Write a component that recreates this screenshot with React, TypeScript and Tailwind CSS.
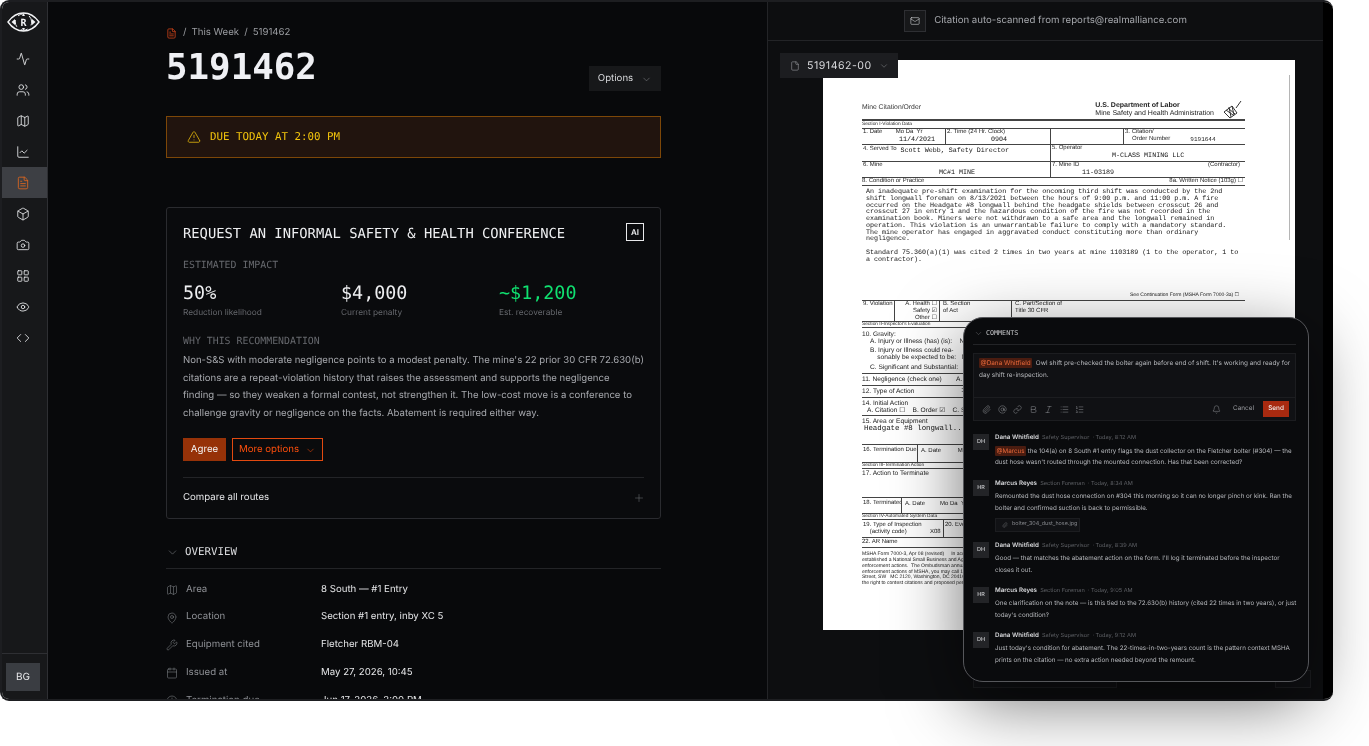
import React from "react";
import { Activity, Users, Map as MapIcon, ChartLine, FileText, Box, Camera, LayoutGrid, Eye, Code, ChevronDown, TriangleAlert, Plus, MapPin, Wrench, Calendar, Clock, Mail, File, Paperclip, AtSign, Link, Bold, Italic, List, ListOrdered, Bell } from "lucide-react";

const MONO = "font-['DejaVu_Sans_Mono','Liberation_Mono',monospace]";
const INTER = "font-['Inter','Liberation_Sans',sans-serif]";

function Logo() {
  return (
    <svg width="33" height="20" viewBox="0 0 33 20" fill="none" stroke="#f2f3f5" strokeWidth="1.4">
      <path d="M1 10 C6 3 11 1 16.5 1 C22 1 27 3 32 10 C27 17 22 19 16.5 19 C11 19 6 17 1 10Z" />
      <circle cx="16.5" cy="10" r="8.2" strokeWidth="1" strokeDasharray="7 5" strokeDashoffset="3.5" />
      <path d="M4.5 10 L8 7 V13Z M28.5 10 L25 7 V13Z M16.5 1.5 L15 4 H18Z M16.5 18.5 L15 16 H18Z" fill="#f2f3f5" stroke="none" />
      <text x="16.5" y="13.6" textAnchor="middle" fontSize="10" fontWeight="700" fill="#f2f3f5" stroke="none" fontFamily="DejaVu Sans Mono">R</text>
    </svg>
  );
}

function Sidebar() {
  const items = [Activity, Users, MapIcon, ChartLine, FileText, Box, Camera, LayoutGrid, Eye, Code];
  return (
    <div className="flex h-full w-[46px] shrink-0 flex-col border-r border-[#2e2f33] bg-[#17181a]">
      <div className="flex h-[41px] items-center justify-center pb-[1px] pr-[3px]"><Logo /></div>
      <div className="flex flex-col">
        {items.map((I, i) => (
          <div key={i} className={`flex h-[31px] items-center justify-center pr-[3px] ${i === 4 ? "bg-[#3d3f44]" : ""}`}>
            <I size={14} strokeWidth={1.4} color={i === 4 ? "#e8691e" : "#f2f3f5"} />
          </div>
        ))}
      </div>
      <div className="mt-auto flex h-[46px] items-start justify-center border-t border-[#2e2f33] pr-[3px] pt-[9px]">
        <div className={`flex h-[28px] w-[34px] items-center justify-center bg-[#3a3d42] text-[10px] text-[#e8e9eb] ${INTER}`}>BG</div>
      </div>
    </div>
  );
}

function Stat({ value, label, color }: { value: string; label: string; color: string }) {
  return (
    <div className="w-[158px] shrink-0">
      <div className={`text-[18.4px] leading-[24px] ${MONO} ${color}`}>{value}</div>
      <div className="mt-[1px] text-[8.3px] leading-[12px] text-[#66686d]">{label}</div>
    </div>
  );
}

function OverviewRow({ I, label, value }: { I: typeof MapIcon; label: string; value: string }) {
  return (
    <div className="flex h-[27.8px] shrink-0 items-center pt-[2px] text-[9.66px]">
      <I size={12} strokeWidth={1.1} color="#85878c" className="w-[12px]" />
      <span className="ml-[8px] w-[135px] text-[#8f9196]">{label}</span>
      <span className="text-[#e4e5e7]">{value}</span>
    </div>
  );
}

function Main() {
  return (
    <div className={`h-full w-[719px] shrink-0 overflow-hidden bg-[#08090b] pl-[118px] pr-[106px] pt-[23px] ${INTER}`}>
      <div className="flex h-[15px] items-center gap-[5px] pt-[2px] text-[9.66px] text-[#9a9ca1]">
        <FileText size={11} strokeWidth={1.6} color="#e0481a" />
        <span className="ml-[1px]">/</span>
        <span>This Week</span>
        <span>/</span>
        <span>5191462</span>
      </div>
      <div className="relative flex h-[76px] items-start justify-between">
        <div className={`mt-[4px] text-[35.8px] font-bold leading-[48px] text-[#eff0f4] ${MONO}`}>5191462</div>
        <div className="mt-[26px] flex h-[25px] w-[72px] items-center justify-center gap-[8px] bg-[#17181a] pt-[2px] text-[9.66px] text-[#d8d9dc]">
          Options <ChevronDown size={11} strokeWidth={1} color="#9a9ca1" />
        </div>
      </div>
      <div className={`flex h-[42px] items-center border border-[#7d4708] bg-[#21140e] pl-[20px] text-[10.8px] text-[#f2c40c] ${MONO}`}>
        <TriangleAlert size={14} strokeWidth={1.3} color="#f2c40c" />
        <span className="ml-[9px]">DUE TODAY AT 2:00 PM</span>
      </div>
      <div className="mt-[49px] h-[312px] rounded-[3px] border border-[#2a2b2f] bg-[#0a0b0d] px-[16px] pt-[15px]">
        <div className="flex h-[18px] items-center justify-between">
          <div className={`pt-[3px] text-[13.8px] leading-[18px] text-[#eeeff1] ${MONO}`}>REQUEST AN INFORMAL SAFETY &amp; HEALTH CONFERENCE</div>
          <div className="flex h-[18px] w-[18px] items-center justify-center border border-[#e8e9eb] text-[8px] font-semibold text-[#eeeff1]">AI</div>
        </div>
        <div className={`mt-[19px] text-[9.9px] leading-[12px] text-[#66686d] ${MONO}`}>ESTIMATED IMPACT</div>
        <div className="mt-[10px] flex">
          <Stat value="50%" label="Reduction likelihood" color="text-[#eeeff1]" />
          <Stat value="$4,000" label="Current penalty" color="text-[#eeeff1]" />
          <Stat value="~$1,200" label="Est. recoverable" color="text-[#10e070]" />
        </div>
        <div className={`mt-[17px] text-[9.9px] leading-[12px] text-[#66686d] ${MONO}`}>WHY THIS RECOMMENDATION</div>
        <p className="mt-[4px] whitespace-nowrap text-[9.58px] leading-[17.7px] text-[#a6a8ad]">
          Non-S&amp;S with moderate negligence points to a modest penalty. The mine's 22 prior 30 CFR 72.630(b)<br />
          citations are a repeat-violation history that raises the assessment and supports the negligence<br />
          finding — so they weaken a formal contest, not strengthen it. The low-cost move is a conference to<br />
          challenge gravity or negligence on the facts. Abatement is required either way.
        </p>
        <div className="mt-[15px] flex gap-[6px] text-[9.66px]">
          <div className="flex h-[23px] w-[43px] items-center justify-center bg-[#963208] pt-[2px] text-[#f4f4f4]">Agree</div>
          <div className="flex h-[23px] w-[91px] items-center justify-center gap-[6px] border border-[#e34a10] pt-[2px] text-[#ff4f0c]">
            More options <ChevronDown size={11} strokeWidth={1.1} color="#ff4f0c" />
          </div>
        </div>
        <div className="mt-[16px] flex h-[40px] items-center justify-between border-t border-[#232427] pt-[2px] text-[9.66px] text-[#e4e5e7]">
          Compare all routes <Plus size={12} strokeWidth={1} color="#77797e" className="mr-[-1px]" />
        </div>
      </div>
      <div className="mt-[23px] flex h-[20px] items-center">
        <ChevronDown size={13} strokeWidth={1} color="#85878c" />
        <span className={`ml-[6px] text-[10.8px] text-[#d8d9dc] ${MONO}`}>OVERVIEW</span>
      </div>
      <div className="mt-[6px] border-t border-[#232427] pt-[6px]">
        <OverviewRow I={MapIcon} label="Area" value="8 South — #1 Entry" />
        <OverviewRow I={MapPin} label="Location" value="Section #1 entry, inby XC 5" />
        <OverviewRow I={Wrench} label="Equipment cited" value="Fletcher RBM-04" />
        <OverviewRow I={Calendar} label="Issued at" value="May 27, 2026, 10:45" />
        <OverviewRow I={Clock} label="Termination due" value="Jun 17, 2026, 2:00 PM" />
      </div>
    </div>
  );
}

const S = "font-['Liberation_Sans',sans-serif]";
const M = "font-['Liberation_Mono',monospace]";

function Cell({ w, children, last }: { w?: string; children?: React.ReactNode; last?: boolean }) {
  return <div className={`${w ?? "flex-1"} ${last ? "" : "border-r border-[#444]"} overflow-hidden pl-[1px]`}>{children}</div>;
}

function Tiny({ children, cls = "", sz = "text-[6.6px]" }: { children: React.ReactNode; cls?: string; sz?: string }) {
  return <div className={`whitespace-pre leading-[7px] text-[#222] ${sz} ${S} ${cls}`}>{children}</div>;
}
function Sm({ children, cls = "" }: { children: React.ReactNode; cls?: string }) {
  return <Tiny sz="text-[6px]" cls={cls}>{children}</Tiny>;
}
function Sec({ children, first }: { children: React.ReactNode; first?: boolean }) {
  return <div className={`whitespace-pre text-[4.8px] text-[#222] ${S} ${first ? "h-[7px] leading-[7px]" : "h-[6px] border-b border-[#444] leading-[5px]"}`}>{children}</div>;
}
function Ty({ children, cls = "", sz = "text-[6.7px]" }: { children: React.ReactNode; cls?: string; sz?: string }) {
  return <div className={`leading-[7px] text-[#111] whitespace-pre ${sz} ${M} ${cls}`}>{children}</div>;
}

function Doc() {
  return (
    <div className="relative ml-[55px] mt-[19px] h-[570px] w-[472px] shrink-0 overflow-hidden bg-white pl-[39px] pr-[50px] pt-[42px]">
      <div className="absolute right-[5px] top-[15px] h-[165px] w-[1px] bg-[#b5b5b5]" />
      <div className="flex h-[17px] items-start justify-between">
        <div className={`mt-[1px] text-[6.8px] leading-[9px] text-[#333] ${S}`}>Mine Citation/Order</div>
        <div className="mr-[3px] flex items-start">
          <div className={`text-[7px] leading-[8px] text-[#222] ${S}`}>
            <b className="font-semibold">U.S. Department of Labor</b>
            <br />Mine Safety and Health Administration
          </div>
          <svg width="20" height="20" viewBox="0 0 20 20" className="ml-[8px] mt-[-2px]" fill="none" stroke="#333" strokeWidth="1">
            <path d="M2 12 L10 6 L15 13 L8 18Z M4 10 L11 15 M6 8 L13 14 M7 7 L9 17 M10 6 L12 15 M14 8 L19 1" />
          </svg>
        </div>
      </div>
      <div className="border-t-2 border-[#444]" />
      <Sec first>Section I-Violation Data</Sec>
      <div className="flex h-[17px] border-y border-[#444]">
        <Cell w="w-[84px]"><Sm>1. Date        Mo Da  Yr</Sm><Ty cls="pl-[36px] pt-[1px]">11/4/2021</Ty></Cell>
        <Cell w="w-[105px]"><Sm>2. Time (24 Hr. Clock)</Sm><Ty cls="pl-[44px] pt-[1px]">0904</Ty></Cell>
        <Cell w="w-[73px]" />
        <Cell last><Sm>3. Citation/</Sm><Sm cls="flex pl-[7px]"><span>Order Number</span><span className={`ml-[20px] ${M}`}>9191644</span></Sm></Cell>
      </div>
      <div className="flex h-[17px] border-b border-[#444]">
        <Cell w="w-[189px]"><div className="flex items-start"><Sm cls="pt-[1px]">4. Served To</Sm><Ty cls="ml-[4px] pt-[3px]">Scott Webb, Safety Director</Ty></div></Cell>
        <Cell last><Sm>5. Operator</Sm><Ty cls="pl-[60px] pt-[1px]">M-CLASS MINING LLC</Ty></Cell>
      </div>
      <div className="flex h-[16px] border-b border-[#444]">
        <Cell w="w-[189px]"><Sm>6. Mine</Sm><Ty cls="pl-[76px] pt-[1px]">MC#1 MINE</Ty></Cell>
        <Cell last>
          <div className="flex justify-between pr-[5px]"><Sm>7. Mine ID</Sm><Sm>(Contractor)</Sm></div>
          <Ty cls="pl-[30px] pt-[1px]">11-03189</Ty>
        </Cell>
      </div>
      <div className="flex h-[8px] items-center justify-between border-b border-[#444]">
        <Sm>8. Condition or Practice</Sm>
        <Sm cls="pr-[2px]">8a. Written Notice (103g) ☐</Sm>
      </div>
      <div className={`pl-[4px] pt-[3px] text-[6.68px] leading-[6.75px] text-[#111] whitespace-pre ${M}`}>
        {`An inadequate pre-shift examination for the oncoming third shift was conducted by the 2nd
shift longwall foreman on 8/13/2021 between the hours of 9:00 p.m. and 11:00 p.m. A fire
occurred on the Headgate #8 longwall behind the headgate shields between crosscut 26 and
crosscut 27 in entry 1 and the hazardous condition of the fire was not recorded in the
examination book. Miners were not withdrawn to a safe area and the longwall remained in
operation. This violation is an unwarrantable failure to comply with a mandatory standard.
The mine operator has engaged in aggravated conduct constituting more than ordinary
negligence.

Standard 75.360(a)(1) was cited 2 times in two years at mine 1103189 (1 to the operator, 1 to
a contractor).`}
      </div>
      <div className="mt-[27px] flex h-[10px] items-center justify-end pr-[6px]"><Tiny sz="text-[5px]">See Continuation Form (MSHA Form 7000-3a) ☐</Tiny></div>
      <div className="flex h-[22px] border-y border-[#444]">
        <Cell w="w-[33px]"><Sm>9. Violation</Sm></Cell>
        <Cell w="w-[45px]"><Sm cls="text-right pr-[2px]">{"A. Health ☐\nSafety ☑\nOther ☐"}</Sm></Cell>
        <Cell w="w-[72px]"><Sm cls="pl-[2px]">{"B. Section\nof Act"}</Sm></Cell>
        <Cell last><Sm cls="pl-[2px]">{"C. Part/Section of\nTitle 30 CFR"}</Sm></Cell>
      </div>
      <Sec>Section II-Inspector's Evaluation</Sec>
      <div className="h-[46px] border-b border-[#444] pt-[3px]">
        <Tiny>10. Gravity:</Tiny>
        <Tiny cls="pl-[8px]">{"A. Injury or Illness (has) (is):    No Likelihood"}</Tiny>
        <Tiny cls="pl-[8px] pt-[2px]">{"B. Injury or Illness could rea-\n    sonably be expected to be:   No Lost Workdays"}</Tiny>
        <Tiny cls="pl-[8px] pt-[3px]">{"C. Significant and Substantial:         Yes"}</Tiny>
      </div>
      <div className="flex h-[12px] items-center border-b border-[#444]"><Tiny>{"11. Negligence (check one)        A. None"}</Tiny></div>
      <div className="flex h-[12px] items-center border-b border-[#444]"><Tiny>12. Type of Action</Tiny><Ty cls="ml-[47px]">104(d)(2)</Ty></div>
      <div className="h-[18px] border-b border-[#444] pt-[2px]"><Tiny>14. Initial Action</Tiny><Tiny cls="pl-[5px]">{"A. Citation ☐    B. Order ☑    C. Safeguard"}</Tiny></div>
      <div className="h-[29px] border-b border-[#444] pt-[2px]"><Tiny>15. Area or Equipment</Tiny><Ty cls="pl-[2px] pt-[1px]" sz="text-[7.4px]">Headgate #8 longwall..</Ty></div>
      <div className="flex h-[18px] border-b border-[#444]">
        <Cell w="w-[56px]"><Sm cls="pt-[2px]">16. Termination Due</Sm></Cell>
        <Cell last><Sm cls="pl-[2px] pt-[3px]">{"A. Date          Mo Da"}</Sm></Cell>
      </div>
      <Sec>Section III-Termination Action</Sec>
      <div className="h-[29px] border-b border-[#444] pt-[1px]"><Tiny>17. Action to Terminate</Tiny></div>
      <div className="flex h-[16px] border-b border-[#444]">
        <Cell w="w-[40px]"><Sm cls="pt-[2px]">18. Terminated</Sm></Cell>
        <Cell last><Sm cls="pl-[2px] pt-[3px]">{"A. Date         Mo Da  Yr"}</Sm></Cell>
      </div>
      <Sec>Section IV-Automated System Data</Sec>
      <div className="flex h-[18px] border-b border-[#444]">
        <Cell w="w-[82px]"><Sm cls="pt-[2px]">{"19. Type of Inspection\n    (activity code)              X08"}</Sm></Cell>
        <Cell last><Sm cls="pt-[2px]">20. Event No.</Sm></Cell>
      </div>
      <div className="h-[10px] border-b border-[#444]"><Sm cls="pt-[1px]">22. AR Name</Sm></div>
      <div className={`mt-[4px] text-[5px] leading-[5.8px] text-[#222] whitespace-pre ${S}`}>
        {`MSHA Form 7000-3, Apr 08 (revised)     In accordance with
established a National Small Business and Agriculture
enforcement actions.  The Ombudsman annually evaluates
enforcement actions of MSHA, you may call 1-888-
Street, SW   MC 2120, Washington, DC 20416.  Please
the right to contest citations and proposed penalties.`}
      </div>
    </div>
  );
}

function Right() {
  return (
    <div className="relative flex h-full min-w-0 flex-1 flex-col border-l border-[#232427] bg-[#0d0e10]">
      <div className={`flex h-[39px] shrink-0 items-center justify-center gap-[8px] border-b border-[#232427] text-[9.66px] text-[#a6a8ad] ${INTER}`}>
        <div className="flex h-[22px] w-[22px] items-center justify-center border border-[#2e2f33] bg-[#17181a]"><Mail size={10} strokeWidth={1.3} color="#e4e5e7" /></div>
        Citation auto-scanned from reports@realmalliance.com
      </div>
      <Doc />
      <div className={`absolute left-[12px] top-[51px] flex h-[25px] w-[118px] items-center bg-[#1c1d20] pl-[10px] text-[10.6px] tracking-[0.5px] text-[#d8d9dc] ${INTER}`}>
        <File size={10} strokeWidth={1.3} color="#a6a8ad" />
        <span className="ml-[7px]">5191462-00</span>
        <ChevronDown size={10} strokeWidth={1} color="#a6a8ad" className="ml-[7px]" />
      </div>
    </div>
  );
}

function Comment({ a, name, role, time, children, cls = "" }: { a: string; name: string; role: string; time: string; children: React.ReactNode; cls?: string }) {
  return (
    <div className={`flex ${cls}`}>
      <div className="flex h-[16px] w-[16px] shrink-0 items-center justify-center bg-[#232427] text-[5.5px] font-medium text-[#c8c9cc]">{a}</div>
      <div className="ml-[6px] min-w-0 flex-1">
        <div className="flex h-[8px] items-center whitespace-pre text-[6.2px] leading-[8px]">
          <span className="font-semibold text-[#d8d9dc]">{name}</span>
          <span className="text-[5.6px] text-[#5f6166]">  {role}  · {time}</span>
        </div>
        <div className="mt-[3.5px] whitespace-nowrap text-[6.24px] leading-[11.7px] text-[#b6b8bc]">{children}</div>
      </div>
    </div>
  );
}

function Mention({ children }: { children: React.ReactNode }) {
  return <span className="rounded-[1px] bg-[#4a1c10] px-[1.5px] py-[1px] text-[#e8693a]">{children}</span>;
}

function Comments() {
  const tools = [Paperclip, AtSign, Link, Bold, Italic, List, ListOrdered];
  return (
    <div className={`absolute left-[963px] top-[317px] h-[365px] w-[346px] rounded-[20px] border border-[#56575b] bg-[#0a0b0d] pl-[9px] pr-[12px] shadow-[0_20px_70px_rgba(0,0,0,0.55)] ${INTER}`}>
      <div className="flex h-[27px] items-center border-b border-[#232427] pl-[1px] pt-[4px]">
        <ChevronDown size={9} strokeWidth={1} color="#85878c" />
        <span className={`ml-[3px] text-[6.7px] text-[#c8c9cc] ${MONO}`}>COMMENTS</span>
      </div>
      <div className="mt-[8px] flex h-[68px] flex-col border border-[#1c1d20] bg-[#101114]">
        <div className="h-[43px] shrink-0 whitespace-nowrap pl-[5px] pr-[8px] pt-[4px] text-[6.4px] leading-[11.7px] text-[#b6b8bc]">
          <Mention>@Dana Whitfield</Mention>&nbsp; Owl shift pre-checked the bolter again before end of shift. It's working and ready for<br />
          day shift re-inspection.
        </div>
        <div className="flex flex-1 items-center border-t border-[#1c1d20] pl-[8px] pr-[6px]">
          <div className="flex gap-[6.5px]">
            {tools.map((I, i) => <I key={i} size={9} strokeWidth={1.2} color="#9a9ca1" />)}
          </div>
          <Bell size={9} strokeWidth={1.2} color="#9a9ca1" className="ml-auto" />
          <span className="ml-[12px] text-[6.4px] text-[#9a9ca1]">Cancel</span>
          <div className="ml-[9px] flex h-[16px] w-[26px] items-center justify-center bg-[#a82a10] text-[6.4px] font-medium text-[#f0f0f0]">Send</div>
        </div>
      </div>
      <div className="mt-[13px] flex flex-col gap-[10px]">
        <Comment a="DH" name="Dana Whitfield" role="Safety Supervisor" time="Today, 8:12 AM">
          <Mention>@Marcus</Mention> the 104(a) on 8 South #1 entry flags the dust collector on the Fletcher bolter (#304) — the<br />
          dust hose wasn't routed through the mounted connection. Has that been corrected?
        </Comment>
        <Comment cls="mt-[1px]" a="HR" name="Marcus Reyes" role="Section Foreman" time="Today, 8:34 AM">
          Remounted the dust hose connection on #304 this morning so it can no longer pinch or kink. Ran the<br />
          bolter and confirmed suction is back to permissible.
          <div className="mt-[3px] flex h-[14px] w-[85px] items-center gap-[4px] border border-[#1c1d20] bg-[#111215] pl-[6px] text-[5.4px] text-[#85878c]">
            <Paperclip size={6} strokeWidth={1.2} /> bolter_304_dust_hose.jpg
          </div>
        </Comment>
        <Comment a="DH" name="Dana Whitfield" role="Safety Supervisor" time="Today, 8:39 AM">
          Good — that matches the abatement action on the form. I'll log it terminated before the inspector<br />
          closes it out.
        </Comment>
        <Comment a="HR" name="Marcus Reyes" role="Section Foreman" time="Today, 9:05 AM">
          One clarification on the note — is this tied to the 72.630(b) history (cited 22 times in two years), or just<br />
          today's condition?
        </Comment>
        <Comment a="DH" name="Dana Whitfield" role="Safety Supervisor" time="Today, 9:12 AM">
          Just today's condition for abatement. The 22-times-in-two-years count is the pattern context MSHA<br />
          prints on the citation — no extra action needed beyond the remount.
        </Comment>
      </div>
    </div>
  );
}

export default function App() {
  return (
    <div className="relative h-[746px] w-[1369px] overflow-hidden bg-white blur-[0.3px] [text-rendering:geometricPrecision]">
      <div className="relative flex h-[701px] w-[1333px] overflow-hidden rounded-[9px] border-2 border-r-0 border-[#1d1e21]">
        <Sidebar />
        <Main />
        <Right />
        <div className="h-full w-[10px] shrink-0 bg-black" />
      </div>
      <div className="absolute left-[973px] top-[670px] h-[18px] w-[144px] border border-[#1d1e21] bg-[#101114]" />
      <div className="absolute left-[1275px] top-[670px] h-[18px] w-[36px] border border-[#1d1e21] bg-[#101114]" />
      <Comments />
    </div>
  );
}
